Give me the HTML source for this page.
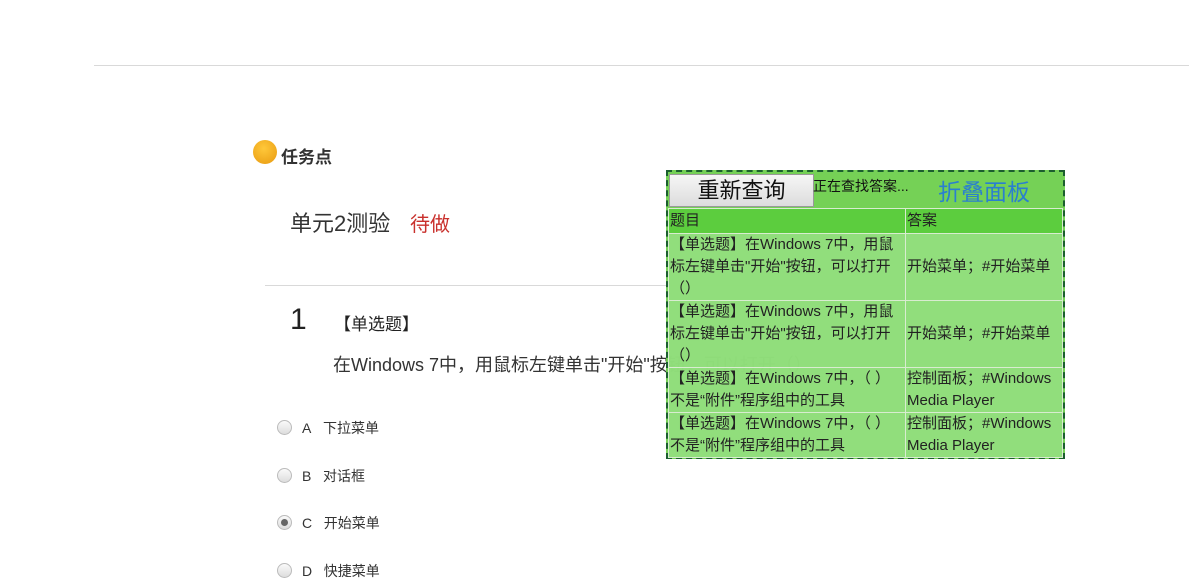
<!DOCTYPE html>
<html><head><meta charset="utf-8"><style>
*{margin:0;padding:0;box-sizing:border-box}
body{width:1189px;height:578px;overflow:hidden;background:#fff;font-family:"Liberation Sans","Noto Sans CJK SC",sans-serif;color:#333;position:relative}
.a{position:absolute;white-space:nowrap}
.rad{position:absolute;width:15px;height:15px;border-radius:50%;border:1px solid #bbb;background:linear-gradient(#fafafa,#ddd)}
.rad.on::after{content:"";position:absolute;left:3px;top:3px;width:7px;height:7px;border-radius:50%;background:#666}
#p{position:absolute;left:666px;top:170px;width:399px;height:289px;border:2px dashed #1b5e2e;background:rgba(102,204,68,0.9)}
table{border-collapse:collapse;width:100%;font-size:15px;color:#222;line-height:22px;table-layout:fixed}
td{border:1px solid #d8ecd0;vertical-align:middle;padding:0 0 0 1px;word-break:break-all}
.h td{background:#5ccd3e;height:25px}
.b td{background:rgba(150,225,130,0.85)}
</style></head><body>
<div class="a" style="left:94px;top:65px;width:1095px;height:1px;background:#d9d9d9"></div>
<div class="a" style="left:253px;top:140px;width:24px;height:24px;border-radius:50%;background:radial-gradient(circle at 45% 35%,#ffc83a,#e89a10)"></div>
<div class="a" style="left:281px;top:143px;font-size:17px;font-weight:bold;color:#333">任务点</div>
<div class="a" style="left:290px;top:206px;font-size:22px;color:#333">单元2测验</div>
<div class="a" style="left:410px;top:208px;font-size:20px;color:#c9302c">待做</div>
<div class="a" style="left:265px;top:285px;width:800px;height:1px;background:#d9d9d9"></div>
<div class="a" style="left:290px;top:303px;font-size:30px;color:#222">1</div>
<div class="a" style="left:334px;top:310px;font-size:17px;color:#222">【单选题】</div>
<div class="a" style="left:333px;top:351px;font-size:18px;color:#333">在Windows 7中，用鼠标左键单击"开始"按钮，可以打开（）</div>
<div class="rad" style="left:277px;top:420px"></div><div class="a" style="left:302px;top:418px;font-size:14px">A&nbsp;&nbsp;&nbsp;下拉菜单</div>
<div class="rad" style="left:277px;top:468px"></div><div class="a" style="left:302px;top:466px;font-size:14px">B&nbsp;&nbsp;&nbsp;对话框</div>
<div class="rad on" style="left:277px;top:515px"></div><div class="a" style="left:302px;top:513px;font-size:14px">C&nbsp;&nbsp;&nbsp;开始菜单</div>
<div class="rad" style="left:277px;top:563px"></div><div class="a" style="left:302px;top:561px;font-size:14px">D&nbsp;&nbsp;&nbsp;快捷菜单</div>
<div id="p">
<div style="height:36px;position:relative">
<div class="a" style="left:1px;top:2px;width:145px;height:33px;background:linear-gradient(#f6f6f6,#dcdcdc);border:1px solid #999;font-size:22px;color:#111;text-align:center;line-height:31px">重新查询</div>
<div class="a" style="left:145px;top:4px;font-size:14px;color:#111">正在查找答案...</div>
<div class="a" style="left:270px;top:1px;font-size:23px;color:#2a7fd0">折叠面板</div>
</div>
<table>
<tr class="h"><td style="width:237px">题目</td><td>答案</td></tr>
<tr class="b"><td style="height:66px">&#12304;单选题&#12305;在Windows 7中，用鼠标左键单击"开始"按钮，可以打开（）</td><td>开始菜单；#开始菜单</td></tr>
<tr class="b"><td style="height:67px">&#12304;单选题&#12305;在Windows 7中，用鼠标左键单击"开始"按钮，可以打开（）</td><td>开始菜单；#开始菜单</td></tr>
<tr class="b"><td style="height:45px">&#12304;单选题&#12305;在Windows 7中，（ ）不是“附件”程序组中的工具</td><td>控制面板；#Windows Media Player</td></tr>
<tr class="b"><td style="height:45px">&#12304;单选题&#12305;在Windows 7中，（ ）不是“附件”程序组中的工具</td><td>控制面板；#Windows Media Player</td></tr>
</table>
</div>
</body></html>
